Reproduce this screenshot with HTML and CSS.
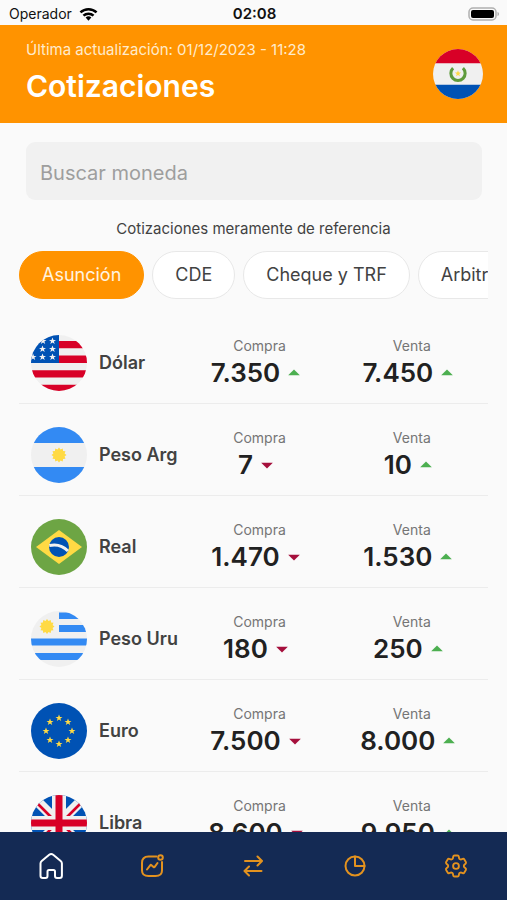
FILE: index.html
```html
<!DOCTYPE html>
<html lang="es">
<head>
<meta charset="utf-8">
<meta name="viewport" content="width=device-width, initial-scale=1">
<title>Cotizaciones</title>
<link rel="stylesheet" href="styles.css">
</head>
<body>
<svg class="defs" aria-hidden="true">
  <defs>
    <clipPath id="round"><circle cx="28" cy="28" r="28"/></clipPath>
    <path id="star" d="M0-3.500 1-1.100 3.500-1.100 1.400.6 2.200 3 0 1.500-2.200 3-1.400.6-3.500-1.100-1-1.100Z"/>
    <path id="sun" d="M0-7.500 1.500-5.600 3.700-6.500 4.100-4.100 6.500-3.700 5.600-1.500 7.500 0 5.600 1.500 6.500 3.700 4.100 4.100 3.700 6.500 1.500 5.600 0 7.500-1.500 5.600-3.700 6.500-4.100 4.100-6.500 3.700-5.600 1.500-7.500 0-5.600-1.500-6.500-3.700-4.100-4.100-3.700-6.500-1.500-5.600Z"/>
    <symbol id="up" viewBox="0 0 24 24"><path d="m7 14 5-5 5 5z" fill="#4caf50"/></symbol>
    <symbol id="down" viewBox="0 0 24 24"><path d="m7 10 5 5 5-5z" fill="#a50f3c"/></symbol>
  </defs>
</svg>

<div class="status">
  <span class="carrier">Operador
    <svg class="wifi" viewBox="0 0 20 14" aria-hidden="true">
      <g fill="none" stroke="#000" stroke-width="2.600"><path d="M1.500 5.400a12.200 12.200 0 0 1 17 0"/><path d="M4.700 8.800a7.600 7.600 0 0 1 10.600 0"/></g>
      <path d="m10 14-3-3.200a4.300 4.300 0 0 1 6 0z"/>
    </svg>
  </span>
  <span class="clock">02:08</span>
  <svg class="battery" viewBox="0 0 32 14" aria-hidden="true">
    <rect x="1" y="1" width="27" height="12" rx="4" fill="none" stroke="#b0b0b0" stroke-width="1.500"/>
    <rect x="3" y="3" width="23" height="8" rx="2"/>
    <path d="M29.500 5c2 .5 2 3.500 0 4z" fill="#b0b0b0"/>
  </svg>
</div>

<header class="header">
  <div>
    <p class="updated">Última actualización: 01/12/2023 - 11:28</p>
    <h1>Cotizaciones</h1>
  </div>
  <svg class="country" viewBox="0 0 56 56" role="img" aria-label="Paraguay">
    <g clip-path="url(#round)">
      <path fill="#f0f0f0" d="M0 0h56v56H0z"/><path fill="#d80027" d="M0 0h56v16H0z"/><path fill="#0052b4" d="M0 40h56v16H0z"/>
      <path d="M22.500 21.500a8 8 0 1 0 11 0" fill="none" stroke="#5f9b3c" stroke-width="3.400"/>
      <use href="#star" x="28" y="27.500" fill="#ffda44"/>
    </g>
  </svg>
</header>

<main class="main">
  <input class="search" type="search" placeholder="Buscar moneda" aria-label="Buscar moneda">
  <p class="note">Cotizaciones meramente de referencia</p>
  <div class="chips">
    <button class="chip active" type="button">Asunción</button>
    <button class="chip" type="button">CDE</button>
    <button class="chip" type="button">Cheque y TRF</button>
    <button class="chip" type="button">Arbitraje</button>
  </div>

  <ul class="rates">
    <li class="rate">
      <div class="currency">
        <svg class="flag" viewBox="0 0 56 56" aria-hidden="true"><g clip-path="url(#round)">
          <path fill="#f0f0f0" d="M0 0h56v56H0z"/>
          <path fill="#d80027" d="M28 6h28v7.300H28zM28 20.600h28V28H28zM0 35.300h56v7.300H0zM0 49.700h56V56H0z"/>
          <path fill="#0052b4" d="M0 0h28v28H0z"/>
          <g fill="#f0f0f0"><use href="#star" x="21.500" y="6"/><use href="#star" x="12" y="6"/><use href="#star" x="11.500" y="14"/><use href="#star" x="21.500" y="14"/><use href="#star" x="2" y="22"/><use href="#star" x="11.500" y="22"/><use href="#star" x="21.500" y="22"/></g>
        </g></svg>
        <span>Dólar</span>
      </div>
      <div class="price"><span class="label">Compra</span><span class="value">7.350<svg class="trend" role="img" aria-label="sube"><use href="#up"/></svg></span></div>
      <div class="price"><span class="label">Venta</span><span class="value">7.450<svg class="trend" role="img" aria-label="sube"><use href="#up"/></svg></span></div>
    </li>
    <li class="rate">
      <div class="currency">
        <svg class="flag" viewBox="0 0 56 56" aria-hidden="true"><g clip-path="url(#round)">
          <path fill="#f0f0f0" d="M0 0h56v56H0z"/><path fill="#338af3" d="M0 0h56v16H0zM0 40h56v16H0z"/>
          <use href="#sun" x="28" y="28" fill="#ffda44"/>
        </g></svg>
        <span>Peso Arg</span>
      </div>
      <div class="price"><span class="label">Compra</span><span class="value">7<svg class="trend" role="img" aria-label="baja"><use href="#down"/></svg></span></div>
      <div class="price"><span class="label">Venta</span><span class="value">10<svg class="trend" role="img" aria-label="sube"><use href="#up"/></svg></span></div>
    </li>
    <li class="rate">
      <div class="currency">
        <svg class="flag" viewBox="0 0 56 56" aria-hidden="true"><g clip-path="url(#round)">
          <path fill="#6da544" d="M0 0h56v56H0z"/><path fill="#ffda44" d="m28 11 23 17-23 17L5 28z"/>
          <circle cx="28" cy="28" r="10" fill="#0052b4"/>
          <path d="M18.300 26.500c7-1.500 14 .5 18.700 5.500" fill="none" stroke="#f0f0f0" stroke-width="3"/>
        </g></svg>
        <span>Real</span>
      </div>
      <div class="price"><span class="label">Compra</span><span class="value">1.470<svg class="trend" role="img" aria-label="baja"><use href="#down"/></svg></span></div>
      <div class="price"><span class="label">Venta</span><span class="value">1.530<svg class="trend" role="img" aria-label="sube"><use href="#up"/></svg></span></div>
    </li>
    <li class="rate">
      <div class="currency">
        <svg class="flag" viewBox="0 0 56 56" aria-hidden="true"><g clip-path="url(#round)">
          <path fill="#f0f0f0" d="M0 0h56v56H0z"/>
          <path fill="#338af3" d="M28 1.500h28v6.500H28zM28 14h28v7H28zM0 27.500h56v7H0zM0 42h56v7H0z"/>
          <use href="#sun" x="16" y="15.500" fill="#ffda44"/>
        </g></svg>
        <span>Peso Uru</span>
      </div>
      <div class="price"><span class="label">Compra</span><span class="value">180<svg class="trend" role="img" aria-label="baja"><use href="#down"/></svg></span></div>
      <div class="price"><span class="label">Venta</span><span class="value">250<svg class="trend" role="img" aria-label="sube"><use href="#up"/></svg></span></div>
    </li>
    <li class="rate">
      <div class="currency">
        <svg class="flag" viewBox="0 0 56 56" aria-hidden="true"><g clip-path="url(#round)">
          <path fill="#0052b4" d="M0 0h56v56H0z"/>
          <g fill="#ffda44"><use href="#star" x="28" y="15"/><use href="#star" x="37" y="19"/><use href="#star" x="41" y="28"/><use href="#star" x="37" y="37"/><use href="#star" x="28" y="41"/><use href="#star" x="19" y="37"/><use href="#star" x="15" y="28"/><use href="#star" x="19" y="19"/></g>
        </g></svg>
        <span>Euro</span>
      </div>
      <div class="price"><span class="label">Compra</span><span class="value">7.500<svg class="trend" role="img" aria-label="baja"><use href="#down"/></svg></span></div>
      <div class="price"><span class="label">Venta</span><span class="value">8.000<svg class="trend" role="img" aria-label="sube"><use href="#up"/></svg></span></div>
    </li>
    <li class="rate">
      <div class="currency">
        <svg class="flag" viewBox="0 0 56 56" aria-hidden="true"><g clip-path="url(#round)">
          <path fill="#0052b4" d="M0 0h56v56H0z"/>
          <path d="m4 4 48 48M52 4 4 52" stroke="#f0f0f0" stroke-width="10"/>
          <path d="m5 7 16 16M51 7 35 23M5 49l16-16M51 49 35 33" stroke="#d80027" stroke-width="2.600"/>
          <path d="M28 0v56M0 28h56" stroke="#f0f0f0" stroke-width="14"/>
          <path d="M28 0v56M0 28h56" stroke="#d80027" stroke-width="7"/>
        </g></svg>
        <span>Libra</span>
      </div>
      <div class="price"><span class="label">Compra</span><span class="value">8.600<svg class="trend" role="img" aria-label="baja"><use href="#down"/></svg></span></div>
      <div class="price"><span class="label">Venta</span><span class="value">9.950<svg class="trend" role="img" aria-label="sube"><use href="#up"/></svg></span></div>
    </li>
  </ul>
</main>

<nav class="tabs">
  <a class="tab current" href="#inicio" aria-label="Inicio"><svg viewBox="0 0 28 28"><path d="M3.500 11.500q0-1.500 1.200-2.500l7.500-6.200q2-1.600 4 0L23.700 9q1.200 1 1.200 2.500v12.200q0 2.300-2.300 2.300H20q-2 0-2-2v-4.500q0-1.500-1.500-1.500H12q-1.500 0-1.500 1.500V24q0 2-2 2H5.800q-2.300 0-2.300-2.300z"/></svg></a>
  <a class="tab" href="#graficos" aria-label="Gráficos"><svg viewBox="0 0 28 28"><path d="M18.500 4.500h-8Q4 4.500 4 11v7.500Q4 24 10.500 24h7q6.500 0 6.500-5.500V10M9 17.500l3.200-4.200q.6-.7 1.300-.1l2 1.800q.7.600 1.200-.1L19.500 11"/><circle cx="22.500" cy="5.500" r="2.300"/></svg></a>
  <a class="tab" href="#cambio" aria-label="Cambio"><svg viewBox="0 0 28 28"><path d="M6 9h16.500M18.500 4.500 23 9l-4.500 4.500M22.500 19H6M10 14.500 5.500 19l4.500 4.500"/></svg></a>
  <a class="tab" href="#resumen" aria-label="Resumen"><svg viewBox="0 0 28 28"><circle cx="14" cy="14" r="9.500"/><path d="M14 4.500V14h9.500"/></svg></a>
  <a class="tab" href="#ajustes" aria-label="Ajustes"><svg viewBox="0 0 24 24"><path class="gear" d="M9.594 3.940c.09-.542.56-.94 1.110-.94h2.593c.55 0 1.020.398 1.110.94l.213 1.281c.063.374.313.686.645.87.074.04.147.083.22.127.325.196.72.257 1.075.124l1.217-.456a1.125 1.125 0 0 1 1.370.49l1.296 2.247a1.125 1.125 0 0 1-.26 1.431l-1.003.827c-.293.241-.438.613-.43.992a7.723 7.723 0 0 1 0 .255c-.008.378.137.75.43.991l1.004.827c.424.35.534.955.26 1.430l-1.298 2.247a1.125 1.125 0 0 1-1.369.491l-1.217-.456c-.355-.133-.75-.072-1.076.124a6.470 6.470 0 0 1-.22.128c-.331.183-.581.495-.644.869l-.213 1.281c-.09.543-.56.94-1.110.94h-2.594c-.55 0-1.019-.398-1.110-.94l-.213-1.281c-.062-.374-.312-.686-.644-.87a6.520 6.520 0 0 1-.22-.127c-.325-.196-.72-.257-1.076-.124l-1.217.456a1.125 1.125 0 0 1-1.369-.49l-1.297-2.247a1.125 1.125 0 0 1 .26-1.431l1.004-.827c.292-.24.437-.613.43-.991a6.932 6.932 0 0 1 0-.255c.007-.38-.138-.751-.43-.992l-1.004-.827a1.125 1.125 0 0 1-.26-1.430l1.297-2.247a1.125 1.125 0 0 1 1.370-.491l1.216.456c.356.133.751.072 1.076-.124.072-.044.146-.086.22-.128.332-.183.582-.495.644-.869l.214-1.280Z"/><circle class="gear" cx="12" cy="12" r="2.500"/></svg></a>
</nav>
</body>
</html>
```
FILE: styles.css
```css
* { box-sizing: border-box; }

body {
  margin: 0;
  height: 100vh;
  display: flex;
  flex-direction: column;
  background: #fafafa;
  color: #424242;
  font-family: Inter, "Liberation Sans", sans-serif;
}

p, h1, ul { margin: 0; padding: 0; }

.defs { position: absolute; width: 0; height: 0; }

.status {
  display: grid;
  grid-template-columns: 1fr auto 1fr;
  align-items: center;
  height: 25px;
  padding: 2px 7px 0 9px;
  font-size: 14px;
  color: #111;
}
.carrier { display: flex; align-items: center; gap: 7px; }
.wifi { width: 19px; height: 14px; }
.clock { font-size: 15px; font-weight: 600; }
.battery { width: 32px; height: 14px; justify-self: end; }

.header {
  display: flex;
  justify-content: space-between;
  align-items: center;
  height: 98px;
  padding: 0 24px 0 26px;
  background: #ff9300;
  color: #fff;
}
.updated { font-size: 15px; line-height: 20px; color: #ffebcc; }
h1 { margin: 8px 0 5px; font-size: 30px; line-height: 36px; font-weight: 600; }
.country { width: 50px; height: 50px; }

.main {
  flex: 1;
  min-height: 0;
  overflow: hidden;
  padding: 19px 19px 0;
}
.search {
  display: block;
  width: calc(100% - 13px);
  height: 58px;
  margin: 0 6px 0 7px;
  padding: 4px 14px 0;
  border: 0;
  border-radius: 9px;
  background: #f1f1f1;
  color: #424242;
  font: inherit;
  font-size: 20px;
  appearance: none;
}
.search::placeholder { color: #9e9e9e; opacity: 1; }

.note {
  margin-top: 19px;
  text-align: center;
  font-size: 15px;
  line-height: 20px;
}

.chips {
  display: flex;
  gap: 8px;
  margin-top: 12px;
  overflow: hidden;
}
.chip {
  flex: none;
  height: 48px;
  padding: 0 22px 2px;
  border: 1px solid #e8e8e8;
  border-radius: 24px;
  background: #fff;
  color: #424242;
  font: inherit;
  font-size: 18px;
}
.chip.active { border-color: #ff9300; background: #ff9300; color: #fff3e0; }

.rates { margin-top: 13px; list-style: none; }
.rate {
  display: grid;
  grid-template-columns: repeat(3, 1fr);
  align-items: center;
  height: 92px;
  padding: 10px 0 0 12px;
  border-bottom: 1px solid #ececec;
}
.currency {
  display: flex;
  align-items: center;
  gap: 12px;
  font-size: 18px;
  font-weight: 600;
  white-space: nowrap;
}
.flag { width: 56px; height: 56px; }
.price { display: flex; flex-direction: column; align-items: center; }
.label { font-size: 14px; line-height: 20px; color: #757575; }
.value {
  display: flex;
  align-items: center;
  font-size: 26px;
  line-height: 34px;
  font-weight: 600;
  color: #212121;
}
.trend { width: 28px; height: 28px; }

.tabs {
  display: grid;
  grid-template-columns: repeat(5, 1fr);
  height: 68px;
  background: #142a54;
}
.tab { display: flex; align-items: center; justify-content: center; color: #e3921f; }
.tab.current { color: #fff; }
.tab svg { width: 28px; height: 28px; fill: none; stroke: currentColor; stroke-width: 2; stroke-linecap: round; stroke-linejoin: round; }
.tab .gear { stroke-width: 1.6; }
```
